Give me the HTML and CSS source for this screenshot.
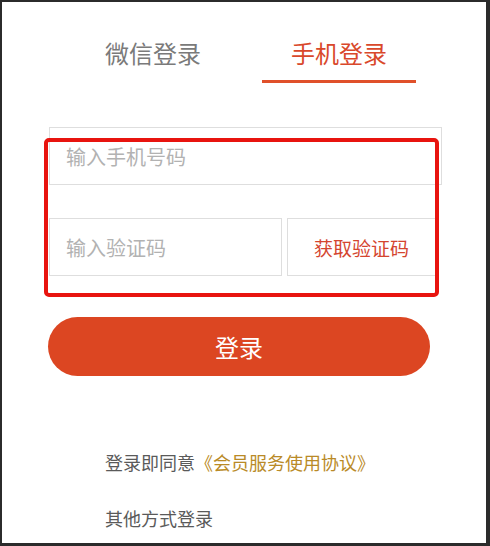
FILE: index.html
```html
<!DOCTYPE html>
<html lang="zh-CN">
<head>
<meta charset="utf-8">
<title>手机登录</title>
<link rel="stylesheet" href="styles.css">
</head>
<body>
<div class="frame">
  <div class="tabs">
    <div class="tab">微信登录</div>
    <div class="tab active">手机登录</div>
  </div>
  <form class="form">
    <input class="field phone" type="text" placeholder="输入手机号码">
    <div class="code-row">
      <input class="field code" type="text" placeholder="输入验证码">
      <button class="get-code" type="button">获取验证码</button>
    </div>
    <button class="login" type="button">登录</button>
  </form>
  <p class="agree">登录即同意<a class="link" href="#">《会员服务使用协议》</a></p>
  <p class="other">其他方式登录</p>
  <div class="highlight"></div>
</div>
</body>
</html>
```

FILE: styles.css
```css
html, body {
  margin: 0;
  padding: 0;
  background: #ffffff;
}

.frame {
  position: relative;
  box-sizing: border-box;
  width: 490px;
  height: 546px;
  border-style: solid;
  border-color: #2b2b2b;
  border-width: 2px 4px 3px 2px;
  font-family: "Noto Sans CJK SC", "Microsoft YaHei", sans-serif;
  overflow: hidden;
}

.tabs {
  display: flex;
  gap: 32px;
  margin-left: 74px;
}

.tab {
  width: 154px;
  text-align: center;
  font-size: 24px;
  line-height: 32px;
  padding-top: 35px;
  padding-bottom: 11px;
  border-bottom: 3px solid transparent;
  color: #7a7a7a;
}

.tab.active {
  color: #d9482b;
  border-bottom-color: #e0502a;
}

.form {
  margin: 44px 0 0 47px;
  display: flex;
  flex-direction: column;
}

.field {
  box-sizing: border-box;
  height: 58px;
  border: 1px solid #dedede;
  padding: 0 0 0 16px;
  margin: 0;
  font-family: inherit;
  font-size: 20px;
  color: #333;
  background: #fff;
  outline: none;
}

.field::placeholder {
  color: #b2b2b2;
}

.phone {
  width: 393px;
}

.code-row {
  display: flex;
  gap: 5px;
  margin-top: 33px;
}

.code {
  width: 233px;
}

.get-code {
  box-sizing: border-box;
  width: 149px;
  height: 58px;
  border: 1px solid #dedede;
  background: #fff;
  font-family: inherit;
  font-size: 19px;
  color: #d4452f;
  padding: 0;
  margin: 0;
}

.login {
  width: 382px;
  height: 59px;
  margin: 41px 0 0 -1px;
  border: none;
  border-radius: 30px;
  background: #dc4622;
  color: #ffffff;
  font-family: inherit;
  font-size: 24px;
  padding: 0;
}

.agree, .other {
  margin: 0 0 0 103px;
  font-size: 18px;
  line-height: 24px;
  color: #5a5a5a;
}

.agree {
  margin-top: 74px;
}

.other {
  margin-top: 32px;
}

.link {
  color: #b98a27;
  text-decoration: none;
}

.highlight {
  position: absolute;
  left: 42px;
  top: 136px;
  width: 395px;
  height: 159px;
  box-sizing: border-box;
  border: 4px solid #e8140f;
  border-radius: 5px;
  pointer-events: none;
}
```
